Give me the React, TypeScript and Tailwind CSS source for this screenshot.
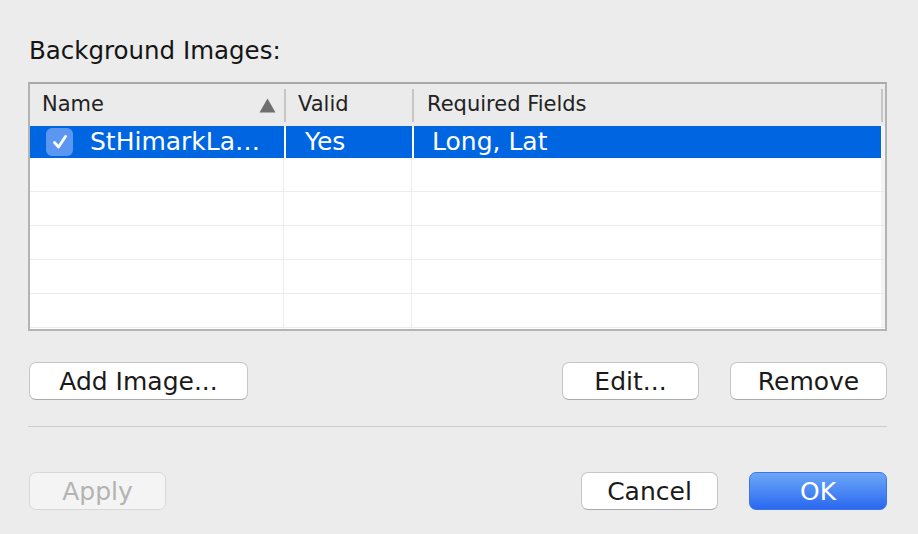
import React from "react";

const font = "font-['DejaVu_Sans',sans-serif]";

const MacButton = ({
  label,
  width,
  kind = "normal",
}: {
  label: string;
  width: string;
  kind?: "normal" | "disabled" | "primary";
}) => {
  const styles =
    kind === "primary"
      ? "bg-gradient-to-b from-[#6da6f7] to-[#2a67ef] border-[#3a76ea] text-white"
      : kind === "disabled"
      ? "bg-[#f4f4f4] border-[#d8d8d8] text-[#b3b3b3]"
      : "bg-white border-[#c6c6c6] border-b-[#a9a9a9] text-[#1a1a1a]";
  return (
    <div
      className={`${width} h-[38px] flex items-center justify-center rounded-[7px] border text-[25px] leading-none ${styles}`}
    >
      {label}
    </div>
  );
};

const Check = () => (
  <div className="w-[27px] h-[28px] rounded-[6px] bg-[#5b97f1] flex items-center justify-center">
    <svg width="20" height="20" viewBox="0 0 20 20">
      <path
        d="M4.5 10.5 L8.5 15 L15.5 4.5"
        fill="none"
        stroke="white"
        strokeWidth="2.8"
        strokeLinecap="round"
        strokeLinejoin="round"
      />
    </svg>
  </div>
);

const HeaderSep = () => <div className="w-[2px] h-[33px] bg-[#c6c6c6]" />;

const EmptyRow = () => (
  <div className="flex h-[34px] border-b border-[#ececec]">
    <div className="w-[254px] border-r border-[#ececec]" />
    <div className="w-[128px] border-r border-[#ececec]" />
    <div className="flex-1" />
    <div className="w-[4px] bg-[#f4f4f4]" />
  </div>
);

export default function App() {
  return (
    <div className={`w-[918px] h-[534px] bg-[#ececec] ${font} text-[#151515] pl-[28px] pr-[31px] pt-[37px]`}>
      <div className="h-[28px] leading-[28px] text-[24.5px] pl-[1px]">Background Images:</div>

      {/* table */}
      <div className="mt-[17px] h-[249px] border-2 border-[#b3b3b3] border-t-[#a9a9a9] bg-white flex flex-col">
        <div className="flex h-[42px] bg-[#ebebeb] items-center text-[21px] text-[#222]">
          <div className="w-[254px] flex items-center justify-between pl-[12px] pr-[8px]">
            <span>Name</span>
            <svg width="17" height="15" viewBox="0 0 17 15">
              <path d="M8.5 0.5 L16.5 14.5 L0.5 14.5 Z" fill="#6f6f6f" />
            </svg>
          </div>
          <HeaderSep />
          <div className="w-[126px] pl-[12px]">Valid</div>
          <HeaderSep />
          <div className="flex-1 pl-[13px]">Required Fields</div>
          <HeaderSep />
          <div className="w-[2px]" />
        </div>

        <div className="flex h-[32px] text-[25px] text-white">
          <div className="w-[254px] bg-[#0065e1] flex items-center pl-[16px] gap-[17px]">
            <Check />
            <span>StHimarkLa…</span>
          </div>
          <div className="w-[2px] bg-white" />
          <div className="w-[126px] bg-[#0065e1] flex items-center pl-[19px]">Yes</div>
          <div className="w-[2px] bg-white" />
          <div className="flex-1 bg-[#0065e1] flex items-center pl-[18px]">Long, Lat</div>
          <div className="w-[4px] bg-[#f4f4f4]" />
        </div>

        <EmptyRow />
        <EmptyRow />
        <EmptyRow />
        <EmptyRow />
        <EmptyRow />
        <div className="flex flex-1">
          <div className="w-[254px] border-r border-[#ececec]" />
          <div className="w-[128px] border-r border-[#ececec]" />
          <div className="flex-1" />
        </div>
      </div>

      <div className="mt-[31px] flex items-center pl-[1px]">
        <MacButton label="Add Image..." width="w-[219px]" />
        <div className="flex-1" />
        <MacButton label="Edit..." width="w-[137px]" />
        <div className="w-[31px]" />
        <MacButton label="Remove" width="w-[157px]" />
      </div>

      <div className="mt-[26px] h-[1px] bg-[#cdcdcd]" />

      <div className="mt-[45px] flex items-center pl-[1px]">
        <MacButton label="Apply" width="w-[137px]" kind="disabled" />
        <div className="flex-1" />
        <MacButton label="Cancel" width="w-[137px]" />
        <div className="w-[31px]" />
        <MacButton label="OK" width="w-[138px]" kind="primary" />
      </div>
    </div>
  );
}
